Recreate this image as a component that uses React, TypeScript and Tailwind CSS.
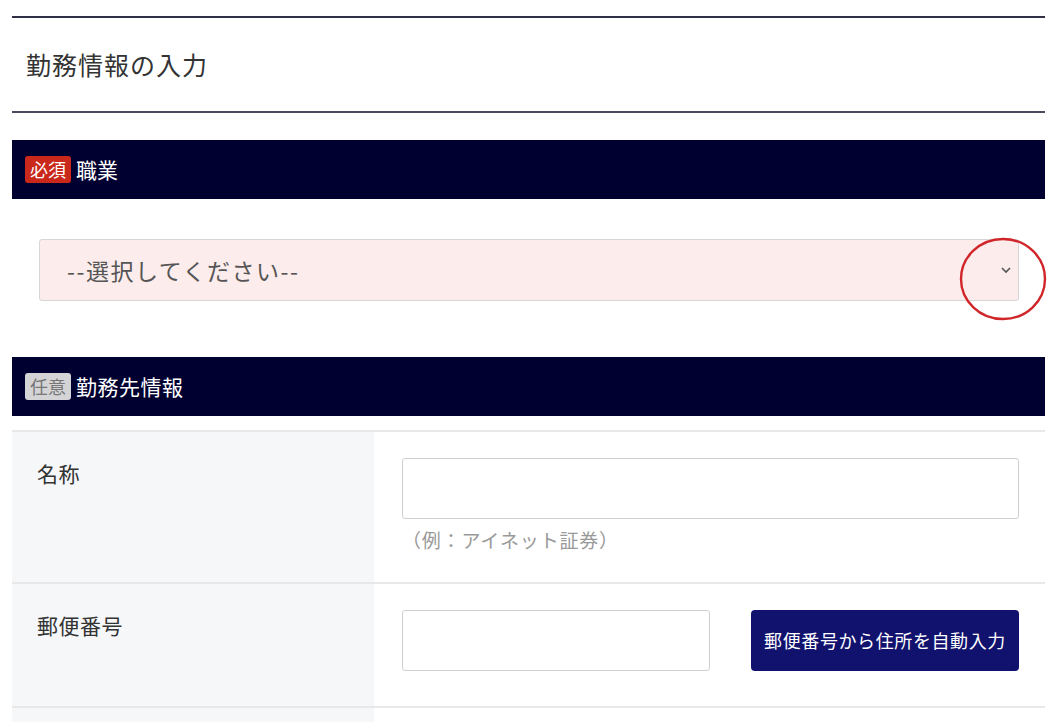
export default function App() {
  return (
    <div
      className="min-h-[722px] bg-white text-[#333]"
      style={{ fontFamily: '"Noto Sans CJK JP", "Noto Sans", sans-serif' }}
    >
      <div className="ml-[12px] mr-[7px] pt-[16px]">
        <div className="border-t-2 border-[#2f2f45]" />
        <h1 className="h-[93px] flex items-center pl-[14px] text-[25px] tracking-[1px] font-normal text-[#333]">
          勤務情報の入力
        </h1>
        <div className="border-t-2 border-[#4a4a5c]" />

        <div className="mt-[27px] h-[59px] bg-[#000030] flex items-center pl-[13px] gap-[5px]">
          <span className="bg-[#c9281b] text-white text-[18px] leading-[27px] px-[5px] rounded-[3px]">
            必須
          </span>
          <span className="text-white text-[21px]">職業</span>
        </div>

        <div className="pl-[27px] pr-[26px] pt-[40px] pb-[56px]">
          <div className="h-[62px] bg-[#fcecec] border border-[#d6d6d6] rounded-[3px] flex items-center justify-between pl-[27px] pr-[6px]">
            <span className="text-[23px] tracking-[1.5px] text-[#555]">--選択してください--</span>
            <svg width="12" height="8" viewBox="0 0 12 8">
              <path d="M2 2 L6 6 L10 2" fill="none" stroke="#555" strokeWidth="1.6" />
            </svg>
          </div>
        </div>

        <div className="h-[59px] bg-[#000030] flex items-center pl-[13px] gap-[5px]">
          <span className="bg-[#d4d4d6] text-[#777] text-[18px] leading-[27px] px-[5px] rounded-[3px]">
            任意
          </span>
          <span className="text-white text-[21px] tracking-[0.5px]">勤務先情報</span>
        </div>

        <div className="mt-[14px] border-t-2 border-[#e8e8e8]">
          <div className="flex border-b-2 border-[#e8e8e8]">
            <div className="w-[362px] shrink-0 bg-[#f6f7f9] pl-[25px] pt-[26px] text-[21px] tracking-[0.5px]">名称</div>
            <div className="flex-1 pl-[28px] pr-[26px] pt-[26px] pb-[27px]">
              <div className="h-[61px] border border-[#cfcfcf] rounded-[3px] bg-white" />
              <div className="mt-[7px] text-[19px] tracking-[0.8px] text-[#999]">（例：アイネット証券）</div>
            </div>
          </div>
          <div className="flex border-b-2 border-[#e8e8e8]">
            <div className="w-[362px] shrink-0 bg-[#f6f7f9] pl-[25px] pt-[26px] text-[21px] tracking-[0.5px]">郵便番号</div>
            <div className="flex-1 pl-[28px] pr-[26px] pt-[26px] pb-[35px] flex gap-[41px]">
              <div className="w-[308px] h-[61px] border border-[#cfcfcf] rounded-[3px] bg-white" />
              <button className="w-[268px] h-[61px] bg-[#11116e] text-white text-[18px] tracking-[0.6px] rounded-[4px]">
                郵便番号から住所を自動入力
              </button>
            </div>
          </div>
          <div className="flex h-[20px]">
            <div className="w-[362px] bg-[#f6f7f9]" />
          </div>
        </div>
      </div>

      {/* annotation circle */}
      <svg
        className="absolute left-[958px] top-[236px]"
        width="90"
        height="88"
        viewBox="0 0 90 88"
      >
        <ellipse cx="45" cy="43" rx="42" ry="40" fill="none" stroke="#d0262a" strokeWidth="2.4" />
      </svg>
    </div>
  );
}
